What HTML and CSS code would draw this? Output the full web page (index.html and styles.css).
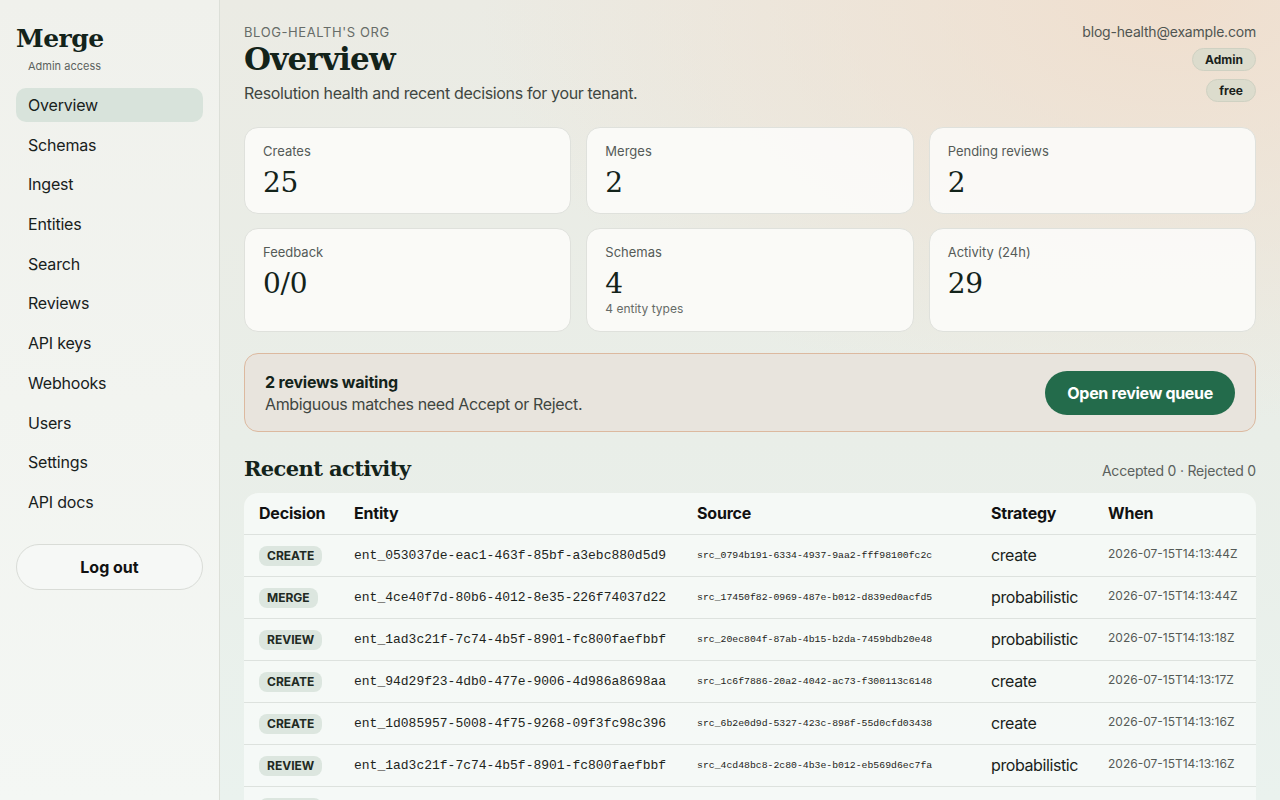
FILE: index.html
```html
<!DOCTYPE html>
<html lang="en">
<head>
    <meta charset="UTF-8">
    <title>Overview - Merge</title>
    <link rel="stylesheet" href="styles.css">
</head>
<body>
    <div class="app">
        <aside class="sidebar">
            <div class="brand">Merge</div>
            <div class="brand-sub">Admin access</div>
            <nav class="nav">
                <a class="nav-item active" href="#">Overview</a>
                <a class="nav-item" href="#">Schemas</a>
                <a class="nav-item" href="#">Ingest</a>
                <a class="nav-item" href="#">Entities</a>
                <a class="nav-item" href="#">Search</a>
                <a class="nav-item" href="#">Reviews</a>
                <a class="nav-item" href="#">API keys</a>
                <a class="nav-item" href="#">Webhooks</a>
                <a class="nav-item" href="#">Users</a>
                <a class="nav-item" href="#">Settings</a>
                <a class="nav-item" href="#">API docs</a>
            </nav>
            <button class="logout">Log out</button>
        </aside>

        <main class="main">
            <header class="page-head">
                <div>
                    <div class="org">Blog-health's org</div>
                    <h1>Overview</h1>
                    <p class="lead">Resolution health and recent decisions for your tenant.</p>
                </div>
                <div class="account">
                    <div class="email">blog-health@example.com</div>
                    <span class="pill">Admin</span>
                    <span class="pill">free</span>
                </div>
            </header>

            <section class="stats">
                <div class="card"><div class="card-label">Creates</div><div class="card-value">25</div></div>
                <div class="card"><div class="card-label">Merges</div><div class="card-value">2</div></div>
                <div class="card"><div class="card-label">Pending reviews</div><div class="card-value">2</div></div>
                <div class="card tall"><div class="card-label">Feedback</div><div class="card-value">0/0</div></div>
                <div class="card tall"><div class="card-label">Schemas</div><div class="card-value">4</div><div class="card-note">4 entity types</div></div>
                <div class="card tall"><div class="card-label">Activity (24h)</div><div class="card-value">29</div></div>
            </section>

            <section class="banner">
                <div>
                    <div class="banner-title">2 reviews waiting</div>
                    <div class="banner-text">Ambiguous matches need Accept or Reject.</div>
                </div>
                <button class="btn-primary">Open review queue</button>
            </section>

            <div class="section-head">
                <h2>Recent activity</h2>
                <span class="muted">Accepted 0 · Rejected 0</span>
            </div>

            <div class="table-wrap">
                <table class="activity">
                    <thead>
                        <tr>
                            <th class="c-dec">Decision</th>
                            <th class="c-ent">Entity</th>
                            <th class="c-src">Source</th>
                            <th class="c-str">Strategy</th>
                            <th class="c-when">When</th>
                        </tr>
                    </thead>
                    <tbody>
                        <tr>
                            <td><span class="tag">Create</span></td>
                            <td class="mono">ent_053037de-eac1-463f-85bf-a3ebc880d5d9</td>
                            <td class="mono small">src_0794b191-6334-4937-9aa2-fff98100fc2c</td>
                            <td class="strategy">create</td>
                            <td class="when">2026-07-15T14:13:44Z</td>
                        </tr>
                        <tr>
                            <td><span class="tag">Merge</span></td>
                            <td class="mono">ent_4ce40f7d-80b6-4012-8e35-226f74037d22</td>
                            <td class="mono small">src_17450f82-0969-487e-b012-d839ed0acfd5</td>
                            <td class="strategy">probabilistic</td>
                            <td class="when">2026-07-15T14:13:44Z</td>
                        </tr>
                        <tr>
                            <td><span class="tag">Review</span></td>
                            <td class="mono">ent_1ad3c21f-7c74-4b5f-8901-fc800faefbbf</td>
                            <td class="mono small">src_20ec804f-87ab-4b15-b2da-7459bdb20e48</td>
                            <td class="strategy">probabilistic</td>
                            <td class="when">2026-07-15T14:13:18Z</td>
                        </tr>
                        <tr>
                            <td><span class="tag">Create</span></td>
                            <td class="mono">ent_94d29f23-4db0-477e-9006-4d986a8698aa</td>
                            <td class="mono small">src_1c6f7886-20a2-4042-ac73-f300113c6148</td>
                            <td class="strategy">create</td>
                            <td class="when">2026-07-15T14:13:17Z</td>
                        </tr>
                        <tr>
                            <td><span class="tag">Create</span></td>
                            <td class="mono">ent_1d085957-5008-4f75-9268-09f3fc98c396</td>
                            <td class="mono small">src_6b2e0d9d-5327-423c-898f-55d0cfd03438</td>
                            <td class="strategy">create</td>
                            <td class="when">2026-07-15T14:13:16Z</td>
                        </tr>
                        <tr>
                            <td><span class="tag">Review</span></td>
                            <td class="mono">ent_1ad3c21f-7c74-4b5f-8901-fc800faefbbf</td>
                            <td class="mono small">src_4cd48bc8-2c80-4b3e-b012-eb569d6ec7fa</td>
                            <td class="strategy">probabilistic</td>
                            <td class="when">2026-07-15T14:13:16Z</td>
                        </tr>
                        <tr>
                            <td><span class="tag">Create</span></td>
                            <td class="mono">ent_7b1e55a0-31c2-4e8d-a1f4-0c2d9e6b7a13</td>
                            <td class="mono small">src_9f3a2c11-7d4e-4b0a-8c55-2e1f6a9d3b70</td>
                            <td class="strategy">create</td>
                            <td class="when">2026-07-15T14:13:15Z</td>
                        </tr>
                    </tbody>
                </table>
            </div>
        </main>
    </div>
</body>
</html>
```

FILE: styles.css
```css
* { box-sizing: border-box; }
html, body {
    margin: 0;
    height: 100%;
    overflow: hidden;
}
body {
    font-family: Inter, "Liberation Sans", Arial, sans-serif;
    letter-spacing: -0.2px;
    color: #18211c;
    background:
        radial-gradient(ellipse 700px 420px at 1180px 0px, rgba(240, 222, 205, 0.95), rgba(240, 222, 205, 0) 100%),
        linear-gradient(180deg, #ebebe4 0%, #e9eee8 55%, #eaf2ee 100%);
}
.app {
    display: flex;
    height: 800px;
}

/* sidebar */
.sidebar {
    width: 220px;
    flex: none;
    padding: 24px 16px;
    border-right: 1px solid #dcdfd8;
    background: linear-gradient(180deg, #f0f1ec 0%, #f4f7f4 100%);
}
.brand {
    font-family: "DejaVu Serif", Georgia, serif;
    font-weight: bold;
    font-size: 25px;
    letter-spacing: -0.5px;
    color: #13231a;
    line-height: 30px;
}
.brand-sub {
    font-size: 11px;
    letter-spacing: 0;
    color: #5c625e;
    margin: 5px 0 0 12px;
}
.nav {
    display: flex;
    flex-direction: column;
    gap: 5.7px;
    margin-top: 15px;
}
.nav-item {
    display: block;
    height: 34px;
    line-height: 34px;
    padding: 0 12px;
    border-radius: 10px;
    color: #18211c;
    text-decoration: none;
    font-size: 16px;
}
.nav-item.active { background: #d8e3db; }
.logout {
    display: block;
    width: 187px;
    height: 46px;
    margin-top: 25px;
    border: 1px solid #d9dcd7;
    border-radius: 23px;
    background: #f6f8f6;
    font-family: inherit;
    font-size: 16px;
    font-weight: bold;
    color: #111;
}

/* main */
.main {
    flex: 1;
    padding: 24px 24px 0 24px;
    min-width: 0;
}
.page-head {
    display: flex;
    justify-content: space-between;
    align-items: flex-start;
}
.org {
    font-size: 13px;
    letter-spacing: 0.6px;
    text-transform: uppercase;
    color: #676c68;
    line-height: 16px;
}
h1 {
    font-family: "DejaVu Serif", Georgia, serif;
    font-size: 31px;
    letter-spacing: -0.8px;
    margin: 0;
    line-height: 38px;
    color: #13231a;
}
.lead {
    margin: 5px 0 0;
    font-size: 16px;
    letter-spacing: -0.35px;
    color: #3f4641;
}
.account {
    display: flex;
    flex-direction: column;
    align-items: flex-end;
    gap: 8px;
}
.email {
    font-size: 14px;
    color: #4f5551;
    line-height: 16px;
}
.pill {
    display: inline-block;
    padding: 0 12px;
    height: 23px;
    line-height: 21px;
    border: 1px solid #cfd1c2;
    border-radius: 12px;
    background: #dcdccd;
    font-size: 12px;
    font-weight: bold;
    letter-spacing: 0;
    color: #1a1f1b;
}

.stats {
    display: grid;
    grid-template-columns: repeat(3, 1fr);
    gap: 14px 15px;
    margin-top: 24px;
}
.card {
    background: rgba(251, 251, 249, 0.92);
    border: 1px solid #dfe1dc;
    border-radius: 14px;
    padding: 15px 18px;
    height: 87px;
}
.card.tall { height: 104px; }
.card-label {
    font-size: 13px;
    letter-spacing: 0;
    color: #555b57;
    line-height: 16px;
}
.card-value {
    font-family: "DejaVu Serif", Georgia, serif;
    font-size: 28px;
    line-height: 32px;
    margin-top: 8px;
    color: #13231a;
}
.card-note {
    font-size: 12px;
    letter-spacing: 0;
    color: #666b67;
    margin-top: 1px;
}

.banner {
    display: flex;
    justify-content: space-between;
    align-items: center;
    margin-top: 21px;
    height: 79px;
    padding: 0 20px;
    border: 1px solid #dcb99f;
    border-radius: 14px;
    background: #e8e4dd;
}
.banner-title {
    font-size: 16px;
    font-weight: bold;
    color: #13231a;
}
.banner-text {
    font-size: 16px;
    letter-spacing: -0.35px;
    color: #3f4641;
    margin-top: 2px;
}
.btn-primary {
    height: 44px;
    padding: 0 22px;
    border: none;
    border-radius: 22px;
    background: #236b4b;
    color: #fff;
    font-family: inherit;
    font-size: 16px;
    font-weight: bold;
    letter-spacing: -0.3px;
}

.section-head {
    display: flex;
    justify-content: space-between;
    align-items: baseline;
    margin-top: 24px;
}
h2 {
    font-family: "DejaVu Serif", Georgia, serif;
    font-size: 21px;
    letter-spacing: -0.6px;
    margin: 0;
    color: #13231a;
}
.muted {
    font-size: 14px;
    color: #5b615d;
}

.table-wrap {
    margin-top: 12px;
    background: rgba(246, 249, 247, 0.9);
    border-radius: 14px 14px 0 0;
    overflow: hidden;
}
.activity {
    width: 100%;
    border-collapse: collapse;
    table-layout: fixed;
}
.activity th {
    text-align: left;
    font-size: 16px;
    font-weight: bold;
    height: 41px;
    padding: 0 0 0 15px;
    border-bottom: 1px solid #dde2de;
    color: #111;
}
.activity td {
    height: 42px;
    padding: 0 0 0 15px;
    border-bottom: 1px solid #dde2de;
    white-space: nowrap;
}
.c-dec { width: 95px; }
.c-ent { width: 343px; }
.c-src { width: 294px; }
.c-str { width: 117px; }
.tag {
    display: inline-block;
    padding: 0 8px;
    height: 20px;
    line-height: 20px;
    border-radius: 8px;
    background: #dce6df;
    font-size: 12px;
    font-weight: bold;
    text-transform: uppercase;
    letter-spacing: 0;
    color: #1f2a23;
}
.mono {
    font-family: "Liberation Mono", "Courier New", monospace;
    font-size: 13px;
    letter-spacing: 0;
    color: #1d2420;
}
.mono.small { font-size: 9.8px; }
.strategy { font-size: 16px; letter-spacing: -0.4px; color: #1a1f1b; }
.when {
    font-size: 12px;
    letter-spacing: 0;
    color: #555b57;
    vertical-align: top;
    padding-top: 11px !important;
}
```
